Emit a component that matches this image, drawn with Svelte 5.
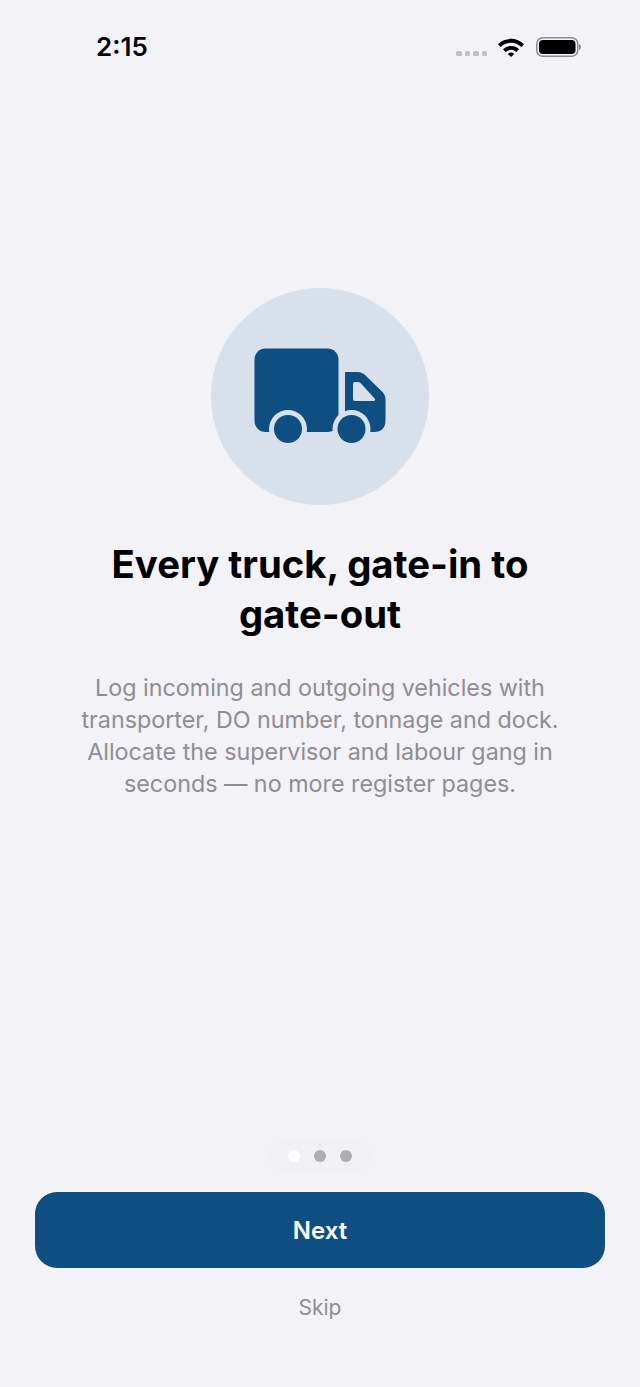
<script>
	const dots = [true, false, false];
</script>

<div class="screen">
	<header class="status">
		<span class="time">2:15</span>
		<div class="status-icons">
			<div class="signal"><i></i><i></i><i></i><i></i></div>
			<svg class="wifi" width="28" height="20" viewBox="0 0 28 20" aria-hidden="true">
				<path d="M1 7.2 A18.5 18.5 0 0 1 27 7.2 L24.3 10 A14.6 14.6 0 0 0 3.7 10 Z" fill="#000" />
				<path d="M6 12.2 A11.4 11.4 0 0 1 22 12.2 L19.3 15 A7.6 7.6 0 0 0 8.7 15 Z" fill="#000" />
				<path d="M10.8 16.9 A4.6 4.6 0 0 1 17.2 16.9 L14 20 Z" fill="#000" />
			</svg>
			<svg class="battery" width="45" height="20" viewBox="0 0 45 20" aria-hidden="true">
				<rect x="0.75" y="0.75" width="41" height="18.5" rx="6" fill="none" stroke="#8a8a8e" stroke-width="1.5" />
				<rect x="3" y="3" width="36.5" height="14" rx="4" fill="#000" />
				<path d="M43 7 C44.2 7.5 45 8.6 45 10 C45 11.4 44.2 12.5 43 13 Z" fill="#8a8a8e" />
			</svg>
		</div>
	</header>

	<main class="hero">
		<div class="badge">
			<svg width="132" height="96" viewBox="0 0 132 96" aria-hidden="true">
				<rect x="0.5" y="0.5" width="84" height="83.5" rx="11" fill="#0f4e81" />
				<path d="M91 24 H103 Q109 24 113 29 L128.5 44 Q131.5 47 131.5 52 V72 Q131.5 84 120 84 H91 Z" fill="#0f4e81" />
				<path d="M99 36 Q99 34 101 34 H104 Q106 34 107 35.5 L121 51 Q121.5 53 120 53 H101 Q99 53 99 51 Z" fill="#d8e0eb" />
				<circle cx="34" cy="81" r="19" fill="#d8e0eb" />
				<circle cx="97.5" cy="81" r="19" fill="#d8e0eb" />
				<circle cx="34" cy="81" r="14" fill="#0f4e81" />
				<circle cx="97.5" cy="81" r="14" fill="#0f4e81" />
			</svg>
		</div>
		<h1>Every truck, gate-in to gate-out</h1>
		<p>Log incoming and outgoing vehicles with transporter, DO number, tonnage and dock. Allocate the supervisor and labour gang in seconds — no more register pages.</p>
	</main>

	<footer class="actions">
		<div class="dots">
			{#each dots as active}
				<span class="dot" class:active></span>
			{/each}
		</div>
		<button type="button" class="next">Next</button>
		<button type="button" class="skip">Skip</button>
	</footer>
</div>

<style>
	:global(body) {
		background: #f2f2f7;
	}

	.screen {
		height: 1387px;
		display: flex;
		flex-direction: column;
		background: #f2f2f7;
		color: #000;
		font-family: Inter, "Liberation Sans", sans-serif;
		overflow: hidden;
	}

	.status {
		display: flex;
		align-items: center;
		justify-content: space-between;
		height: 20px;
		padding: 37px 59px 0 96px;
	}

	.time {
		font-size: 26px;
		font-weight: 600;
		line-height: 20px;
	}

	.status-icons {
		display: flex;
		align-items: center;
	}

	.signal {
		display: flex;
		gap: 3px;
		margin-top: 13px;
		margin-right: 10px;
	}

	.signal i {
		width: 5.5px;
		height: 5.5px;
		border-radius: 1.5px;
		background: #c0c0c4;
	}

	.wifi {
		margin-right: 11px;
	}

	.hero {
		flex: 1;
		display: flex;
		flex-direction: column;
		align-items: center;
		padding-top: 231px;
	}

	.badge {
		width: 218px;
		height: 217px;
		border-radius: 50%;
		background: #d8e0eb;
		display: flex;
		align-items: center;
		justify-content: center;
	}

	.badge svg {
		margin-top: -1px;
	}

	h1 {
		width: 470px;
		margin: 34px 0 0;
		font-size: 38.3px;
		font-weight: 700;
		line-height: 50px;
		text-align: center;
	}

	p {
		width: 490px;
		margin: 33px 0 0;
		color: #8e8e93;
		font-size: 23.3px;
		line-height: 32px;
		text-align: center;
	}

	.actions {
		display: flex;
		flex-direction: column;
		align-items: center;
		padding: 0 35px 66px;
	}

	.dots {
		display: flex;
		align-items: center;
		gap: 14px;
		height: 32px;
		padding: 0 20px;
		border-radius: 16px;
		background: #f0f0f5;
	}

	.dot {
		width: 12px;
		height: 12px;
		border-radius: 50%;
		background: #aeaeb2;
	}

	.dot.active {
		background: #fff;
	}

	.next {
		width: 100%;
		height: 76px;
		margin-top: 20px;
		border: 0;
		border-radius: 22px;
		background: #0f4e81;
		color: #fff;
		font: 600 24px Inter, "Liberation Sans", sans-serif;
	}

	.skip {
		margin-top: 26px;
		padding: 0;
		border: 0;
		background: none;
		color: #8e8e93;
		font: 400 21px/27px Inter, "Liberation Sans", sans-serif;
	}
</style>
